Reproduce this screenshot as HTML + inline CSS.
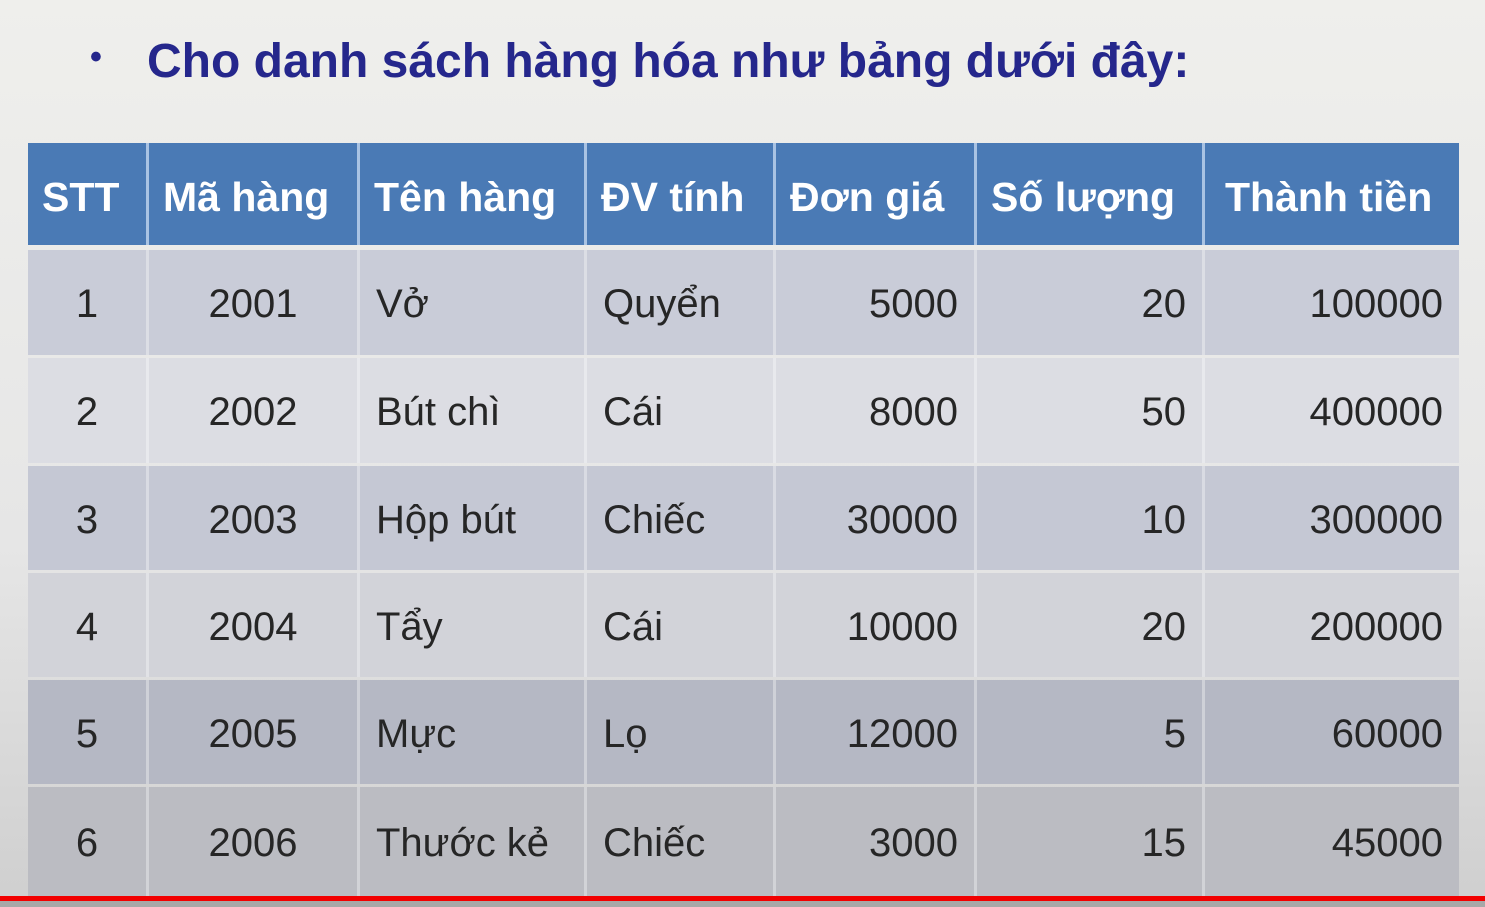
<!DOCTYPE html>
<html><head><meta charset="utf-8"><style>
body{margin:0;width:1485px;height:907px;overflow:hidden;background:linear-gradient(#efefec,#e6e6e6 60%,#cfcfcf);font-family:"Liberation Sans",sans-serif;position:relative}
.t{position:absolute;left:90px;top:34px;font-size:48px;font-weight:bold;color:#25278c;white-space:nowrap}
.t span{position:absolute;left:0;top:4px;font-size:34px}
.tb{position:absolute;left:28px;top:143px;width:1431px}
.r{position:absolute;left:0;width:1431px}
.c{position:absolute;top:0;height:100%;display:flex;align-items:center;box-sizing:border-box;border-right:3px solid rgba(255,255,255,.35)}
.h .c{color:#fff;font-weight:bold;font-size:41px;padding-left:14px;padding-top:6px;border-right:3px solid #a9c3e3}
.b .c{color:#262626;font-size:40px;padding-top:4px}
.redl{position:absolute;left:0;top:896px;width:1485px;height:5px;background:#f20000}
.bot{position:absolute;left:0;top:901px;width:1485px;height:6px;background:#a8a8a8}
</style></head><body>
<div class="t"><span>•</span><div style="margin-left:57px">Cho danh sách hàng hóa như bảng dưới đây:</div></div>
<div class="tb">
<div class="r h" style="top:0;height:102px;background:#4a7ab5">
<div class="c" style="left:0;width:121px">STT</div>
<div class="c" style="left:121px;width:211px">Mã hàng</div>
<div class="c" style="left:332px;width:227px">Tên hàng</div>
<div class="c" style="left:559px;width:189px">ĐV tính</div>
<div class="c" style="left:748px;width:201px">Đơn giá</div>
<div class="c" style="left:949px;width:228px">Số lượng</div>
<div class="c" style="left:1177px;width:254px;border:0;padding-left:20px">Thành tiền</div>
</div>
</div>
<div id="rows"></div>
<script>
var data=[["1","2001","Vở","Quyển","5000","20","100000"],["2","2002","Bút chì","Cái","8000","50","400000"],["3","2003","Hộp bút","Chiếc","30000","10","300000"],["4","2004","Tẩy","Cái","10000","20","200000"],["5","2005","Mực","Lọ","12000","5","60000"],["6","2006","Thước kẻ","Chiếc","3000","15","45000"]];
var tops=[250,358,466,573,680,787],hs=[105,105,104,104,104,109];
var bg=["#c9ccd8","#dcdde3","#c5c8d4","#d2d3d9","#b5b8c4","#bbbcc2"];
var cols=[[0,121,"c"],[121,211,"c"],[332,227,"l"],[559,189,"l"],[748,201,"r"],[949,228,"r"],[1177,254,"r"]];
var h="";
data.forEach(function(d,i){h+='<div class="r b" style="left:28px;top:'+tops[i]+'px;height:'+hs[i]+'px;background:'+bg[i]+'">';
cols.forEach(function(c,j){var st="left:"+c[0]+"px;width:"+c[1]+"px;";
if(c[2]=="c")st+="justify-content:center;";else if(c[2]=="l")st+="padding-left:16px;";else st+="justify-content:flex-end;padding-right:16px;";
if(j==6)st+="border:0;";
h+='<div class="c" style="'+st+'">'+d[j]+'</div>';});h+='</div>';});
document.getElementById("rows").innerHTML=h;
</script>
<div class="redl"></div><div class="bot"></div>
</body></html>
